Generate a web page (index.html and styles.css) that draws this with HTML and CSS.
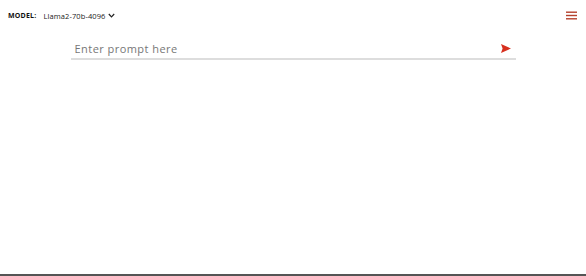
FILE: index.html
```html
<!DOCTYPE html>
<html>
<head>
<meta charset="utf-8">
<link rel="stylesheet" href="styles.css">
</head>
<body>
<div class="app">
  <header class="topbar">
    <div class="model">
      <span class="model-label">MODEL:</span>
      <span class="model-name">Llama2-70b-4096</span>
      <svg class="chev" width="7" height="5" viewBox="0 0 7 5"><path d="M0.8 1 L3.5 3.8 L6.2 1" fill="none" stroke="#222" stroke-width="1.2"/></svg>
    </div>
    <svg class="menu" width="11" height="9" viewBox="0 0 11 9"><rect x="0" y="0.5" width="11" height="1.4" fill="#b5412d"/><rect x="0" y="3.8" width="11" height="1.4" fill="#b5412d"/><rect x="0" y="7.1" width="11" height="1.4" fill="#b5412d"/></svg>
  </header>
  <div class="prompt-wrap">
    <div class="prompt">
      <span class="placeholder">Enter prompt here</span>
      <svg class="send" width="10" height="9" viewBox="0 0 10 9"><path d="M0 0 L10 4.5 L0 9 L1.6 4.5 Z" fill="#d7301f"/></svg>
    </div>
  </div>
  <div class="spacer"></div>
  <div class="bottom-line"></div>
</div>
</body>
</html>
```
FILE: styles.css
```css
html, body { margin: 0; padding: 0; background: #fff; }
body { font-family: "Open Sans", "Noto Sans", sans-serif; }
.app { height: 276px; display: flex; flex-direction: column; }
.topbar { display: flex; justify-content: space-between; align-items: center; padding: 9px 9px 0 8px; height: 13px; }
.model { display: flex; align-items: center; }
.model-label { font-size: 7px; font-weight: 700; letter-spacing: 0.2px; color: #111; }
.model-name { font-size: 7.5px; color: #222; margin-left: 7px; letter-spacing: 0.1px; }
.chev { margin-left: 3px; }
.prompt-wrap { display: flex; justify-content: center; padding-top: 17px; }
.prompt { width: 445px; height: 21px; border-bottom: 2px solid #ddd; display: flex; align-items: center; justify-content: space-between; padding: 0 5px 0 4px; box-sizing: border-box; }
.placeholder { font-size: 11px; color: #777; letter-spacing: 0.45px; }
.spacer { flex: 1; }
.bottom-line { height: 2px; background: #555; }
```
